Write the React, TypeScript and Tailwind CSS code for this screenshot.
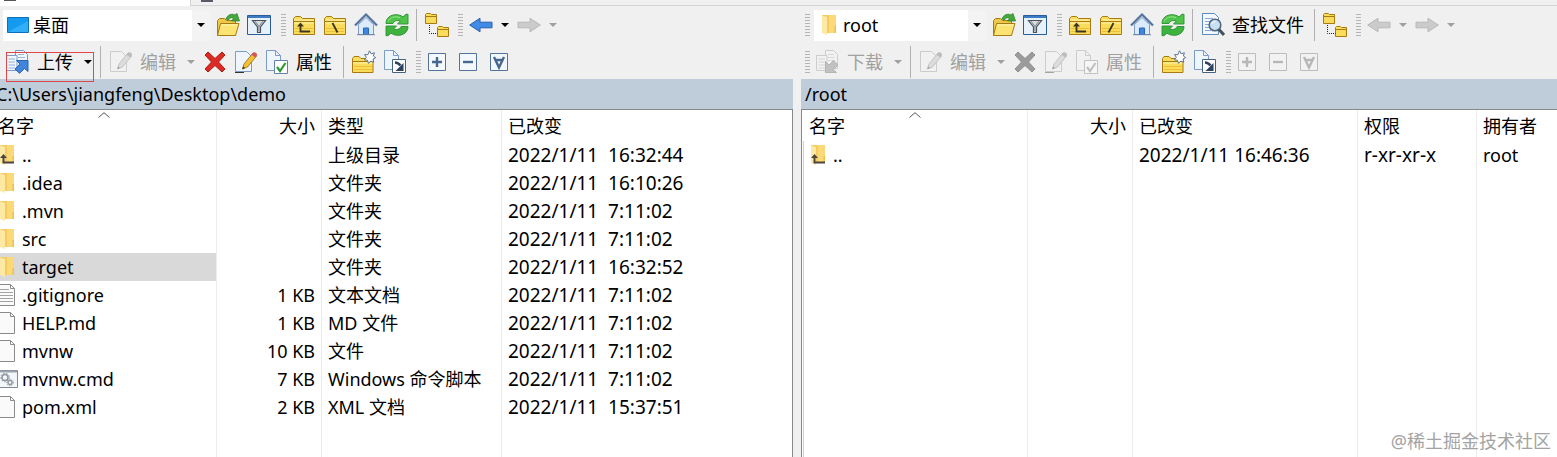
import React from "react";
import clsx from "clsx";

type IconProps = { className?: string };

function Svg({ className, children }: IconProps & { children: React.ReactNode }) {
  return (
    <svg viewBox="0 0 24 24" className={clsx("size-6 shrink-0", className)} fill="none" aria-hidden="true">
      {children}
    </svg>
  );
}

/* Toolbar icons */

const FOLDER = "#f9dc5c";
const EDGE = "#a87b12";

function FolderShape() {
  return (
    <>
      <path d="M1.500 21.500v-16l2-2h5l2 2h12v16z" fill={FOLDER} stroke={EDGE} />
      <path d="M2 8.500h20" stroke={EDGE} />
      <path d="M2 10h20M3 7h19" stroke="#fff3a8" />
      <path d="M3 18.500h18M3 15.500h18" stroke="#eebf35" />
    </>
  );
}

function OpenFolderIcon() {
  return (
    <Svg>
      <path d="M1.500 22.500v-15l2-2h5l2 2h9v15z" fill="#e9c84a" stroke={EDGE} />
      <path d="M1.500 22.500l3-12h18.500l-3.500 12z" fill="#fbe473" stroke={EDGE} />
      <path d="M5.500 12h15.500" stroke="#fff6b8" />
      <path d="M10 6c1-4 6-6 9-4l2-1.500 2.500 7.500h-8l2-2.500c-2-1.500-4-.5-5 1.500z" fill="#45a83c" stroke="#237a22" strokeWidth=".7" />
    </Svg>
  );
}

function FilterIcon() {
  return (
    <Svg>
      <path d="M.5 2.500h23v19h-23z" fill="#e6f1fb" stroke="#2a5c9e" />
      <path d="M1 3h22v2h-22z" fill="#3d7cc4" />
      <path d="M5.500 7.500h13l-5 6.500v5.500h-3v-5.500z" fill="#d9dde1" stroke="#4c545c" strokeWidth="1.200" />
      <path d="M8 8l4 5.500v5M16 8l-4 5.500" stroke="#7d858d" />
    </Svg>
  );
}

function ParentFolderIcon() {
  return (
    <Svg>
      <FolderShape />
      <path d="M8.500 12v6.500h9.500" stroke="#3b3520" strokeWidth="1.800" />
      <path d="M5 13.500l3.500-4 3.500 4z" fill="#3b3520" />
    </Svg>
  );
}

function RootFolderIcon({ slash }: { slash: "back" | "forward" }) {
  return (
    <Svg>
      <FolderShape />
      <path d={slash === "back" ? "M9.500 10l5 9.500" : "M14.500 10l-5 9.500"} stroke="#3b3520" strokeWidth="1.800" />
    </Svg>
  );
}

function HomeIcon() {
  return (
    <Svg>
      <path d="M4.500 21.500v-10l7.500-7 7.500 7v10z" fill="#dcebfb" stroke="#7d9cc4" />
      <path d="M9.500 21.500v-6.500h5v6.500z" fill="#3f86e0" stroke="#2764b5" />
      <path d="M1 12.500L12 1.500l11 11" stroke="#53749f" strokeWidth="2.200" />
      <path d="M3 21.700h18" stroke="#6b86ab" />
    </Svg>
  );
}

function RefreshIcon() {
  const arrow = "M1 10.500c0-5.500 4.500-8.800 10-8.800 3 0 5 .8 7 2.200l3-2.600h2v9.700h-10.500l2.800-2.900c-3.300-1.300-6.300-.3-7.300 2.400z";
  return (
    <Svg>
      <path d={arrow} fill="#4fc44a" stroke="#2a8f2f" strokeWidth=".9" />
      <path d={arrow} transform="rotate(180 12 12)" fill="#3db23c" stroke="#2a8f2f" strokeWidth=".9" />
      <path d="M3 8.500c1.500-4 7-6 12-3.800" stroke="#9be58e" />
    </Svg>
  );
}

function TreeIcon() {
  return (
    <Svg>
      <path d="M.5 10.500v-9l1-1h4l1 1h5v9z" fill={FOLDER} stroke={EDGE} />
      <path d="M1 3.500h10" stroke={EDGE} />
      <path d="M12.500 23.500v-9l1-1h4l1 1h5v9z" fill={FOLDER} stroke={EDGE} />
      <path d="M13 16.500h10" stroke={EDGE} />
      <path d="M4.500 12v8.500h8" stroke="#222" strokeDasharray="1 1" />
    </Svg>
  );
}

function ArrowIcon({ to, disabled }: { to: "left" | "right"; disabled?: boolean }) {
  return (
    <Svg>
      <path
        d={to === "left" ? "M.7 12l10.300-6.800v4h12v5.600h-12v4z" : "M23.300 12L13 5.200v4H1v5.600h12v4z"}
        fill={disabled ? "#cbcbcb" : "#3f8be6"}
        stroke={disabled ? "#b8b8b8" : "#285fae"}
      />
    </Svg>
  );
}

function Sheet() {
  return <path d="M1.500 1.500h11l5 5v15h-16z" fill="#eef5fd" stroke="#7b9cc6" />;
}

function FindIcon() {
  return (
    <Svg>
      <path d="M1.500.5h12l4 4v17h-16z" fill="#f3f8fe" stroke="#5f8bc2" />
      <path d="M4 5.500h8M4 8.500h8M4 11.500h5M4 14.500h4M4 17.500h6" stroke="#86abd8" />
      <circle cx="14" cy="12" r="5.800" fill="#c9dff4" stroke="#56667a" strokeWidth="1.600" />
      <path d="M11 11c.5-2 2-2.500 3.500-2.500" stroke="#fff" />
      <path d="M18 16.500l5 5.500" stroke="#46505c" strokeWidth="3" />
    </Svg>
  );
}

function TransferIcon({ to }: { to: "up" | "down" }) {
  return (
    <Svg>
      <path d="M9.500.5h8l4 4v14h-12z" fill="#f1f7fe" stroke="#7b9cc6" />
      <path d="M12 4.500h6M12 7.500h7M12 10.500h7" stroke="#9bb9de" />
      <path d="M.5 5.500h10.500v15H.5z" fill="#f1f7fe" stroke="#7b9cc6" />
      <path d="M2.500 9h6.500M2.500 12h6.500M2.500 15h6.500M2.500 18h6.500" stroke="#8fb0d9" />
      <path
        d={to === "up" ? "M22 10.500v11l-3.500-3-5 4.800-4.500-4.300 5-5-3.500-3.500z" : "M9.500 22.500v-11l3.500 3.500 4.500-4.500 4.500 4.500-4.700 4.500 3.200 3z"}
        fill="#3f86dc"
        stroke="#2a62b0"
      />
    </Svg>
  );
}

function Pencil({ color }: { color: string }) {
  return (
    <>
      <path d="M8.500 19l1.500-5 9-11 3.500 3-9 11z" fill={color} stroke="#8d6b1d" strokeWidth=".8" />
      <path d="M17.500 4.800l1.500-2c1.500-1.500 5 1 3.800 2.800l-1.500 1.900z" fill="#d9535b" />
      <path d="M8.300 19.300l.8-2.800 2 1.500z" fill="#333" />
    </>
  );
}

function EditIcon({ line }: { line?: boolean }) {
  return (
    <Svg>
      <Sheet />
      {line && <path d="M1 22.500h9" stroke="#333" />}
      <Pencil color="#f6bf2f" />
    </Svg>
  );
}

function DeleteIcon({ disabled }: { disabled?: boolean }) {
  return (
    <Svg>
      <path
        d="M2 5l3-3 7 6.500L19 2l3 3-6.500 7 6.500 7-3 3-7-6.500L5 22l-3-3 6.500-7z"
        fill={disabled ? "#9b9b9b" : "#dc2a25"}
        stroke={disabled ? "#8f8f8f" : "#b01813"}
      />
    </Svg>
  );
}

function PropertiesIcon() {
  return (
    <Svg>
      <path d="M1.500.5h9l5 5v15h-14z" fill="#eef5fd" stroke="#7b9cc6" />
      <path d="M10.500.5v5h5" stroke="#7b9cc6" />
      <path d="M9.500 10.500h13v13h-13z" fill="#fff" stroke="#6683aa" />
      <path d="M12 17l3 4 5.500-8" stroke="#2c9a35" strokeWidth="2.200" />
    </Svg>
  );
}

function NewFolderIcon() {
  return (
    <Svg>
      <path d="M.5 22.500v-14l1.500-2h5l2 2h12v14z" fill={FOLDER} stroke={EDGE} />
      <path d="M1 11.500h19.500" stroke={EDGE} />
      <path d="M1 13h19.500" stroke="#fff3a8" />
      <path d="M2 19.500h18M2 16.500h18" stroke="#eebf35" />
      <path d="M17.500.8l1.600 3 3.300-1-1 3.200 2.300 1.700-2.600 1.300.6 3.300-3-1.200-2.200 2.300-1-3.200-3.200-.3 2-2.600-1.700-2.700 3.300.1z" fill="#fff" stroke="#5b7391" />
    </Svg>
  );
}

function ShortcutIcon() {
  return (
    <Svg>
      <path d="M1.500.5h9l5 5v14h-14z" fill="#eef5fd" stroke="#7b9cc6" />
      <path d="M10.500.5v5h5" stroke="#7b9cc6" />
      <path d="M9.500 9.500h13v13h-13z" fill="#fff" stroke="#46607f" />
      <path d="M12 12.500c3 0 4 1 5.500 3" stroke="#2c4260" strokeWidth="2.500" />
      <path d="M20.500 13v8h-8z" fill="#2c4260" />
    </Svg>
  );
}

function BoxIcon({ sign }: { sign: "plus" | "minus" | "all" }) {
  const d = {
    plus: "M12 7v10M7 12h10",
    minus: "M7 12h10",
    all: "M7 7l5 10.500L17 7M8.500 10h7",
  };
  return (
    <Svg>
      <path d="M3.500 3.500h17v17h-17z" fill="#f3f8fd" stroke="#54739b" />
      <path d={d[sign]} stroke="#47678f" strokeWidth="2.400" />
    </Svg>
  );
}

/* File list icons */

function FolderFileIcon({ up, className }: { up?: boolean; className?: string }) {
  return (
    <svg viewBox="0 0 20 22" className={clsx("h-[22px] w-5 shrink-0", className)} fill="none" aria-hidden="true">
      <path d="M4 1h12.500v18H4z" fill="#f3cd62" />
      <path d="M11 1h7v18h-7z" fill="#fbd878" />
      <path d="M4 1.500l5 1.500v18L4 19z" fill="#fde9a3" />
      <path d="M16.500 12h1.500v7h-1.500z" fill="#efc048" />
      {up && (
        <>
          <path d="M7.500 12v6.500H18" stroke="#4d453b" strokeWidth="2" />
          <path d="M4 14l3.500-4 3.500 4z" fill="#4d453b" />
        </>
      )}
    </svg>
  );
}

function DocFileIcon({ lines }: { lines?: boolean }) {
  return (
    <svg viewBox="0 0 20 22" className="h-[22px] w-5 shrink-0" fill="none" aria-hidden="true">
      <path d="M1.500.5h13l4 4v17h-17z" fill="#fafafa" stroke="#8a8a8a" />
      <path d="M14.500.5v4h4" stroke="#8a8a8a" />
      {lines && <path d="M3 5.500h10M3 8.500h14M3 11.500h14M3 14.500h14M3 17.500h14" stroke="#a3a3a3" />}
    </svg>
  );
}

function ScriptFileIcon() {
  return (
    <svg viewBox="0 0 22 22" className="-mr-0.5 h-[22px] w-[22px] shrink-0" fill="none" aria-hidden="true">
      <path d="M.5 2.500h21v17H.5z" fill="#f4f7fa" stroke="#7f8a94" />
      <path d="M1 3.500h20" stroke="#9aa5ae" strokeWidth="2" />
      <circle cx="9" cy="9.500" r="3" stroke="#8d969e" strokeWidth="1.500" />
      <circle cx="9" cy="9.500" r="4.300" stroke="#8d969e" strokeDasharray="1.500 1.500" />
      <circle cx="14" cy="14.500" r="2" stroke="#8d969e" strokeWidth="1.300" />
      <circle cx="14" cy="14.500" r="3.300" stroke="#8d969e" strokeDasharray="1.200 1.200" />
    </svg>
  );
}

function DesktopIcon() {
  return (
    <svg viewBox="0 0 22 16" className="mr-1 h-4 w-[22px] shrink-0" fill="none" aria-hidden="true">
      <path d="M.5.5h21v15H.5z" fill="#149bf0" stroke="#0d70b8" />
      <path d="M1 15L21 4v11z" fill="#32aef8" />
    </svg>
  );
}

function CaretDown() {
  return (
    <svg viewBox="0 0 8 4" className="h-1 w-2" aria-hidden="true">
      <path d="M0 0h8L4 4z" fill="currentColor" />
    </svg>
  );
}

/* Toolbar parts */

type ToolButtonProps = {
  title: string;
  label?: string;
  disabled?: boolean;
  dim?: boolean;
  className?: string;
  children: React.ReactNode;
};

function ToolButton({ title, label, disabled, dim = disabled, className, children }: ToolButtonProps) {
  return (
    <button type="button" aria-label={title} disabled={disabled} className={clsx("flex shrink-0 items-center", disabled ? "text-[#a0a0a0]" : "text-black", className)}>
      <span className={clsx("flex w-[31px] justify-center", dim && "opacity-40 grayscale")}>{children}</span>
      {label && <span className="pl-1">{label}</span>}
    </button>
  );
}

function DropButton({ title, disabled, className }: { title: string; disabled?: boolean; className?: string }) {
  return (
    <button type="button" aria-label={title} disabled={disabled} className={clsx("flex h-6 w-[17px] shrink-0 items-center justify-center", disabled ? "text-[#a0a0a0]" : "text-black", className)}>
      <CaretDown />
    </button>
  );
}

function Grip({ className }: IconProps) {
  return (
    <svg viewBox="0 0 5 22" className={clsx("h-[22px] w-[5px] shrink-0", className)} aria-hidden="true">
      <path d="M0 .5h5M0 3.500h5M0 6.500h5M0 9.500h5M0 12.500h5M0 15.500h5M0 18.500h5M0 21.500h5" stroke="#b4b4b4" />
    </svg>
  );
}

function Divider() {
  return <div className="mx-1 h-8 w-px shrink-0 bg-[#b0b0b0]" />;
}

type PlaceSelectProps = { name: string; className?: string; icon: React.ReactNode };

function PlaceSelect({ name, className, icon }: PlaceSelectProps) {
  return (
    <label className={clsx("mr-0.5 flex h-[31px] shrink-0 items-center bg-white pl-1", className)}>
      {icon}
      <select aria-label="位置" className="h-full min-w-0 flex-1 appearance-none outline-none">
        <option>{name}</option>
      </select>
      <span className="flex h-full w-[18px] items-center justify-center bg-[#f3f3f3]">
        <CaretDown />
      </span>
    </label>
  );
}

type PaneProps = { remote?: boolean };

function NavToolbar({ remote }: PaneProps) {
  return (
    <div className={clsx("flex h-[38px] items-center", remote ? "pl-1" : "pl-[3px]")}>
      {remote && <Grip className="mr-1" />}
      {remote ? (
        <PlaceSelect name="root" className="w-[172px]" icon={<FolderFileIcon className="mr-[5px]" />} />
      ) : (
        <PlaceSelect name="桌面" className="w-[207px]" icon={<DesktopIcon />} />
      )}
      <ToolButton title="打开目录"><OpenFolderIcon /></ToolButton>
      <ToolButton title="过滤"><FilterIcon /></ToolButton>
      <Grip className="mr-0.5 ml-[7px]" />
      <ToolButton title="上级目录"><ParentFolderIcon /></ToolButton>
      <ToolButton title="根目录"><RootFolderIcon slash={remote ? "forward" : "back"} /></ToolButton>
      <ToolButton title="主目录"><HomeIcon /></ToolButton>
      <ToolButton title="刷新"><RefreshIcon /></ToolButton>
      <Divider />
      {remote && (
        <>
          <ToolButton title="查找文件" label="查找文件" className="pr-1.5"><FindIcon /></ToolButton>
          <Divider />
        </>
      )}
      <ToolButton title="目录树"><TreeIcon /></ToolButton>
      <Grip className="mr-0.5 ml-1.5" />
      <ToolButton title="后退" disabled={remote} dim={false}><ArrowIcon to="left" disabled={remote} /></ToolButton>
      <DropButton title="后退历史" disabled={remote} />
      <ToolButton title="前进" disabled dim={false}><ArrowIcon to="right" disabled /></ToolButton>
      <DropButton title="前进历史" disabled />
    </div>
  );
}

function FileToolbar({ remote }: PaneProps) {
  return (
    <div className={clsx("flex h-[35px] items-center", remote ? "pl-1" : "pl-0.5")}>
      {remote ? (
        <>
          <Grip className="mr-0.5" />
          <ToolButton title="下载" label="下载" disabled><TransferIcon to="down" /></ToolButton>
          <DropButton title="下载选项" disabled className="ml-1.5" />
        </>
      ) : (
        <div className="relative flex items-center">
          <ToolButton title="上传" label="上传"><TransferIcon to="up" /></ToolButton>
          <DropButton title="上传选项" className="ml-1.5" />
          {/* highlight around the upload button */}
          <div className="pointer-events-none absolute top-0.5 right-0.5 left-1 h-[30px] border border-[#e0474a]" />
        </div>
      )}
      <Divider />
      <ToolButton title="编辑" label="编辑" disabled><EditIcon /></ToolButton>
      <DropButton title="编辑选项" disabled className="ml-1.5" />
      <ToolButton title="删除" disabled={remote} dim={false}><DeleteIcon disabled={remote} /></ToolButton>
      <ToolButton title="重命名" disabled={remote}><EditIcon line /></ToolButton>
      <ToolButton title="属性" label="属性" disabled={remote} className="pr-[7px]"><PropertiesIcon /></ToolButton>
      <Divider />
      <ToolButton title="新建目录"><NewFolderIcon /></ToolButton>
      <ToolButton title="新建快捷方式"><ShortcutIcon /></ToolButton>
      <Grip className="ml-1.5" />
      <ToolButton title="选择" disabled={remote}><BoxIcon sign="plus" /></ToolButton>
      <ToolButton title="取消选择" disabled={remote}><BoxIcon sign="minus" /></ToolButton>
      <ToolButton title="全选" disabled={remote}><BoxIcon sign="all" /></ToolButton>
    </div>
  );
}

/* File list */

type Column = { title: string; width?: string; right?: boolean; large?: boolean };
type FileRow = { icon: React.ReactNode; cells: string[]; selected?: boolean };

const localColumns: Column[] = [
  { title: "名字", width: "w-[225px]" },
  { title: "大小", width: "w-[105px]", right: true },
  { title: "类型", width: "w-[180px]" },
  { title: "已改变", large: true },
];

const remoteColumns: Column[] = [
  { title: "名字", width: "w-[225px]" },
  { title: "大小", width: "w-[105px]", right: true },
  { title: "已改变", width: "w-[225px]", large: true },
  { title: "权限", width: "w-[119px]", large: true },
  { title: "拥有者" },
];

const localFiles: FileRow[] = [
  { icon: <FolderFileIcon up />, cells: ["..", "", "上级目录", "2022/1/11  16:32:44"] },
  { icon: <FolderFileIcon />, cells: [".idea", "", "文件夹", "2022/1/11  16:10:26"] },
  { icon: <FolderFileIcon />, cells: [".mvn", "", "文件夹", "2022/1/11  7:11:02"] },
  { icon: <FolderFileIcon />, cells: ["src", "", "文件夹", "2022/1/11  7:11:02"] },
  { icon: <FolderFileIcon />, cells: ["target", "", "文件夹", "2022/1/11  16:32:52"], selected: true },
  { icon: <DocFileIcon lines />, cells: [".gitignore", "1 KB", "文本文档", "2022/1/11  7:11:02"] },
  { icon: <DocFileIcon />, cells: ["HELP.md", "1 KB", "MD 文件", "2022/1/11  7:11:02"] },
  { icon: <DocFileIcon />, cells: ["mvnw", "10 KB", "文件", "2022/1/11  7:11:02"] },
  { icon: <ScriptFileIcon />, cells: ["mvnw.cmd", "7 KB", "Windows 命令脚本", "2022/1/11  7:11:02"] },
  { icon: <DocFileIcon />, cells: ["pom.xml", "2 KB", "XML 文档", "2022/1/11  15:37:51"] },
];

const remoteFiles: FileRow[] = [
  { icon: <FolderFileIcon up />, cells: ["..", "", "2022/1/11 16:46:36", "r-xr-xr-x", "root"] },
];

type FileTableProps = { columns: Column[]; files: FileRow[]; edge?: string };

function FileTable({ columns, files, edge = "border-l-transparent" }: FileTableProps) {
  const line = "border-r border-r-[#ececec] last:border-r-0";
  return (
    <table className="h-full w-full table-fixed border-separate border-spacing-0 whitespace-pre">
      <thead>
        <tr className="h-[31px]">
          {columns.map((col, i) => (
            <th key={col.title} className={clsx("relative p-0 px-1.5 font-normal", line, col.width, col.right ? "text-right" : "text-left")}>
              {col.title}
              {i === 0 && (
                <svg viewBox="0 0 12 6" className="absolute inset-x-0 top-0.5 mx-auto h-1.5 w-3" fill="none" aria-hidden="true">
                  <path d="M.5 5.500L6 .7l5.500 4.800" stroke="#555" />
                </svg>
              )}
            </th>
          ))}
        </tr>
      </thead>
      <tbody>
        {files.map((file) => (
          <tr key={file.cells[0]} className="h-7">
            {file.cells.map((cell, i) =>
              i === 0 ? (
                <td key={i} className={clsx("border-l p-0 pl-[3px]", line, edge, file.selected && "bg-[#d9d9d9] bg-clip-padding")}>
                  <div className="flex items-center gap-1.5">
                    {file.icon}
                    {cell}
                  </div>
                </td>
              ) : (
                <td key={i} className={clsx("p-0 px-1.5", line, columns[i].right && "text-right", columns[i].large && "text-[19px]")}>{cell}</td>
              )
            )}
          </tr>
        ))}
        {/* empty row keeps the column lines running to the bottom */}
        <tr>
          {columns.map((col, i) => (
            <td key={col.title} className={clsx("p-0", line, i === 0 && "border-l", i === 0 && edge)} />
          ))}
        </tr>
      </tbody>
    </table>
  );
}

function Pane({ remote }: PaneProps) {
  return (
    <section className={clsx("flex min-w-0 flex-col overflow-hidden", remote ? "flex-[756]" : "flex-[793]")}>
      <NavToolbar remote={remote} />
      <FileToolbar remote={remote} />
      <div className={clsx("flex h-[30px] shrink-0 items-center bg-[#bfcddb]", remote && "pl-1")}>
        <span className={clsx(!remote && "-ml-1")}>{remote ? "/root" : "C:\\Users\\jiangfeng\\Desktop\\demo"}</span>
      </div>
      <div className={clsx("min-h-0 flex-1 overflow-hidden border-t border-[#888] bg-white", remote ? "border-l" : "border-r")}>
        <div className={clsx("h-full", remote ? "pl-px" : "-ml-2")}>
          {remote ? (
            <FileTable columns={remoteColumns} files={remoteFiles} edge="border-l-[#b9d3ea]" />
          ) : (
            <FileTable columns={localColumns} files={localFiles} />
          )}
        </div>
      </div>
    </section>
  );
}

export default function App() {
  return (
    <div className="relative flex h-screen flex-col overflow-hidden bg-[#f0f0f0] font-['Noto_Sans','Noto_Sans_CJK_SC',sans-serif] text-[18px] leading-6 text-black">
      {/* bottom edge of the session tabs */}
      <div className="flex h-1.5 shrink-0">
        <div className="w-[190px] bg-white pl-1">
          <div className="h-px w-3 bg-[#555]" />
        </div>
        <div className="flex-1 border-b border-l border-[#d4d4d4] pl-2.5">
          <div className="h-0.5 w-3 bg-[#5a5a66]" />
        </div>
      </div>
      <main className="flex min-h-0 flex-1 gap-2">
        <Pane />
        <Pane remote />
      </main>
      <div className="absolute right-1.5 bottom-1 text-[#a3a3a3]">@稀土掘金技术社区</div>
    </div>
  );
}
